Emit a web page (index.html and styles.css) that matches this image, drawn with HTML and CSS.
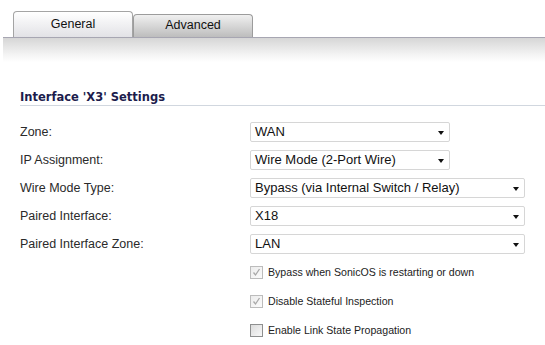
FILE: index.html
```html
<!DOCTYPE html>
<html>
<head>
<meta charset="utf-8">
<link rel="stylesheet" href="styles.css">
</head>
<body>
<div class="tabs">
  <div class="tab active">General</div>
  <div class="tab">Advanced</div>
</div>
<div class="strip"></div>
<h2 class="heading">Interface 'X3' Settings</h2>
<div class="form">
  <div class="row"><span class="label">Zone:</span><div class="select short"><span>WAN</span><i class="arrow"></i></div></div>
  <div class="row"><span class="label">IP Assignment:</span><div class="select short"><span>Wire Mode (2-Port Wire)</span><i class="arrow"></i></div></div>
  <div class="row"><span class="label">Wire Mode Type:</span><div class="select long"><span>Bypass (via Internal Switch / Relay)</span><i class="arrow"></i></div></div>
  <div class="row"><span class="label">Paired Interface:</span><div class="select long"><span>X18</span><i class="arrow"></i></div></div>
  <div class="row"><span class="label">Paired Interface Zone:</span><div class="select long"><span>LAN</span><i class="arrow"></i></div></div>
</div>
<div class="checks">
  <div class="check"><span class="box disabled"><svg viewBox="0 0 13 13" width="13" height="13"><path d="M3.5 6.5 L5.5 9 L9.5 3" fill="none" stroke="#a8a8a8" stroke-width="1.3"/></svg></span><span class="ctext">Bypass when SonicOS is restarting or down</span></div>
  <div class="check"><span class="box disabled"><svg viewBox="0 0 13 13" width="13" height="13"><path d="M3.5 6.5 L5.5 9 L9.5 3" fill="none" stroke="#a8a8a8" stroke-width="1.3"/></svg></span><span class="ctext">Disable Stateful Inspection</span></div>
  <div class="check"><span class="box"></span><span class="ctext">Enable Link State Propagation</span></div>
</div>
</body>
</html>
```
FILE: styles.css
```css
html, body {
  margin: 0;
  padding: 0;
  background: #fff;
  font-family: "Liberation Sans", Arial, sans-serif;
  color: #222;
}
body {
  width: 545px;
  height: 345px;
  overflow: hidden;
}
.tabs {
  display: flex;
  align-items: flex-end;
  padding-left: 13px;
  height: 37px;
  box-sizing: border-box;
}
.tab {
  box-sizing: border-box;
  width: 120px;
  height: 23px;
  border: 1px solid #9c9c9c;
  border-bottom: none;
  border-radius: 4px 4px 0 0;
  background: linear-gradient(#f0f0f0, #bdbdbd);
  font-size: 12.5px;
  color: #111;
  text-align: center;
  padding-top: 3px;
}
.tab.active {
  width: 120px;
  height: 26px;
  background: linear-gradient(#ffffff, #e2e2e6);
  padding-top: 5px;
  border-color: #a4a4a4;
}
.strip {
  margin-left: 3px;
  height: 24px;
  border-top: 1px solid #a7a6b2;
  background: linear-gradient(#d6d6d6, #f6f6f6 75%, #ffffff);
}
.heading {
  margin: 28px 0 0 20px;
  padding-bottom: 1px;
  border-bottom: 1px solid #d1d7df;
  font-family: "DejaVu Sans", Verdana, sans-serif;
  font-weight: bold;
  font-size: 11.5px;
  color: #1c1c4c;
  line-height: 14px;
}
.form {
  margin-top: 16px;
  padding-left: 20px;
  display: flex;
  flex-direction: column;
  gap: 8px;
}
.row {
  display: flex;
  align-items: center;
  height: 20px;
}
.label {
  width: 230px;
  font-size: 12.5px;
  color: #2a2a2a;
}
.select {
  position: relative;
  box-sizing: border-box;
  height: 20px;
  border: 1px solid #d6d6d6;
  border-radius: 2px;
  font-size: 13px;
  color: #111;
  padding-left: 4px;
  line-height: 18px;
  background: #fff;
}
.select.short { width: 200px; }
.select.long { width: 275px; }
.arrow {
  position: absolute;
  right: 5px;
  top: 8px;
  width: 0;
  height: 0;
  border-left: 3.5px solid transparent;
  border-right: 3.5px solid transparent;
  border-top: 4px solid #111;
}
.checks {
  margin-top: 11px;
  padding-left: 250px;
  display: flex;
  flex-direction: column;
  gap: 15px;
}
.check {
  display: flex;
  align-items: center;
  height: 14px;
}
.box {
  box-sizing: border-box;
  width: 13px;
  height: 13px;
  border: 1px solid #8e8f8f;
  background: linear-gradient(135deg, #dcdcdc, #f8f8f8);
  margin-right: 5px;
  display: block;
}
.box.disabled {
  border-color: #bcbcbc;
  background: linear-gradient(135deg, #ececec, #fbfbfb);
}
.box svg {
  display: block;
  margin: -1px;
}
.ctext {
  font-size: 10.6px;
  color: #222;
}
```
